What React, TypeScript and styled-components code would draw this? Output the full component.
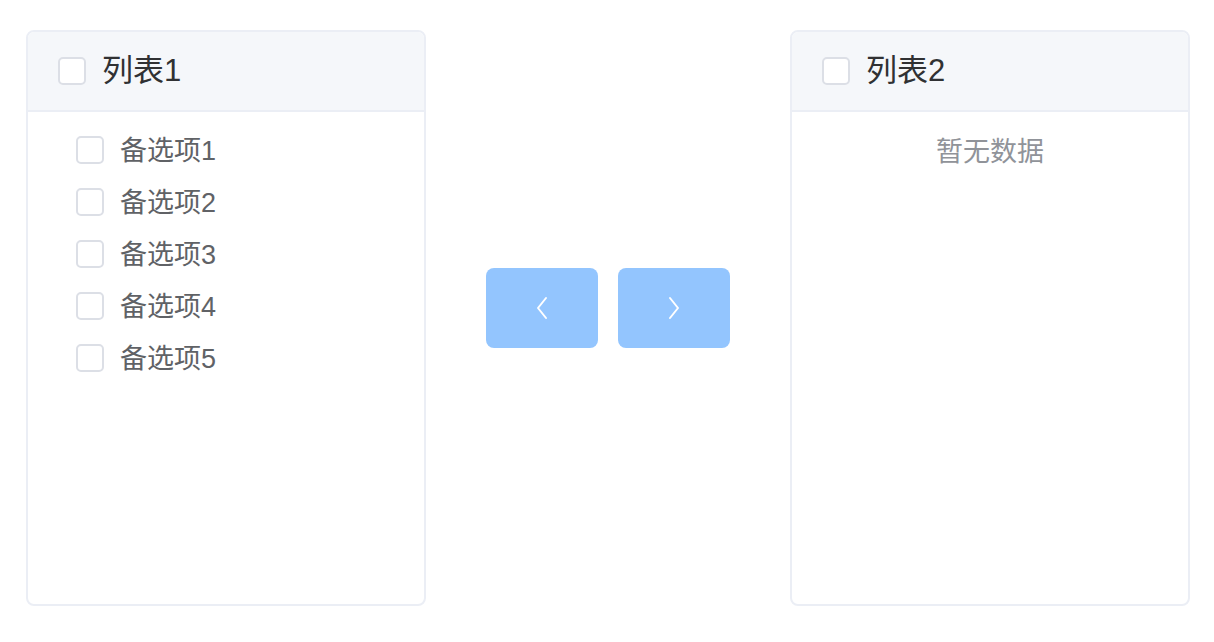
import React from "react";
import styled, { createGlobalStyle } from "styled-components";

const Global = createGlobalStyle`
  html, body { margin: 0; padding: 0; background: #fff; }
  body { font-family: "Liberation Sans", "Noto Sans CJK SC", sans-serif; }
`;

const Page = styled.div`
  display: flex;
  align-items: flex-start;
  padding: 30px 0 30px 26px;
`;

const Panel = styled.div`
  width: 400px;
  height: 576px;
  flex-shrink: 0;
  box-sizing: border-box;
  border: 2px solid #ebeef5;
  border-radius: 8px;
  background: #fff;
  overflow: hidden;
  display: flex;
  flex-direction: column;
`;

const Header = styled.div`
  height: 78px;
  background: #f5f7fa;
  border-bottom: 2px solid #ebeef5;
  display: flex;
  align-items: center;
  padding-left: 30px;
  gap: 16px;
`;

const HeaderTitle = styled.span`
  font-size: 31px;
  line-height: 40px;
  color: #303133;
`;

const Box = styled.span`
  width: 28px;
  height: 28px;
  box-sizing: border-box;
  border: 2px solid #dcdfe6;
  border-radius: 5px;
  background: #fff;
  flex-shrink: 0;
`;

const Body = styled.div`
  padding: 12px 0;
  display: flex;
  flex-direction: column;
`;

const Item = styled.div`
  height: 52px;
  display: flex;
  align-items: center;
  padding-left: 48px;
  gap: 16px;
  font-size: 27px;
  color: #606266;
`;

const ItemLabel = styled.span`
  line-height: 36px;
  padding-top: 1px;
`;

const Empty = styled.div`
  height: 56px;
  line-height: 56px;
  text-align: center;
  font-size: 27px;
  color: #909399;
`;

const Buttons = styled.div`
  display: flex;
  flex-shrink: 0;
  gap: 20px;
  padding: 0 60px;
  align-self: center;
  margin-bottom: 20px;
`;

const Btn = styled.button`
  width: 112px;
  height: 80px;
  border: none;
  border-radius: 8px;
  background: #93c5fe;
  display: flex;
  align-items: center;
  justify-content: center;
  padding: 0;
  cursor: not-allowed;
`;

const Chevron = ({ dir }: { dir: "left" | "right" }) => (
  <svg width="14" height="24" viewBox="0 0 14 24" fill="none">
    <path
      d={dir === "left" ? "M11 2 L3 12 L11 22" : "M3 2 L11 12 L3 22"}
      stroke="#fff"
      strokeWidth="2"
      strokeLinecap="round"
      strokeLinejoin="round"
    />
  </svg>
);

export default function App() {
  const items = ["备选项1", "备选项2", "备选项3", "备选项4", "备选项5"];
  return (
    <>
      <Global />
      <Page>
        <Panel>
          <Header>
            <Box />
            <HeaderTitle>列表1</HeaderTitle>
          </Header>
          <Body>
            {items.map((t) => (
              <Item key={t}>
                <Box />
                <ItemLabel>{t}</ItemLabel>
              </Item>
            ))}
          </Body>
        </Panel>
        <Buttons>
          <Btn>
            <Chevron dir="left" />
          </Btn>
          <Btn>
            <Chevron dir="right" />
          </Btn>
        </Buttons>
        <Panel>
          <Header>
            <Box />
            <HeaderTitle>列表2</HeaderTitle>
          </Header>
          <Body>
            <Empty>暂无数据</Empty>
          </Body>
        </Panel>
      </Page>
    </>
  );
}
